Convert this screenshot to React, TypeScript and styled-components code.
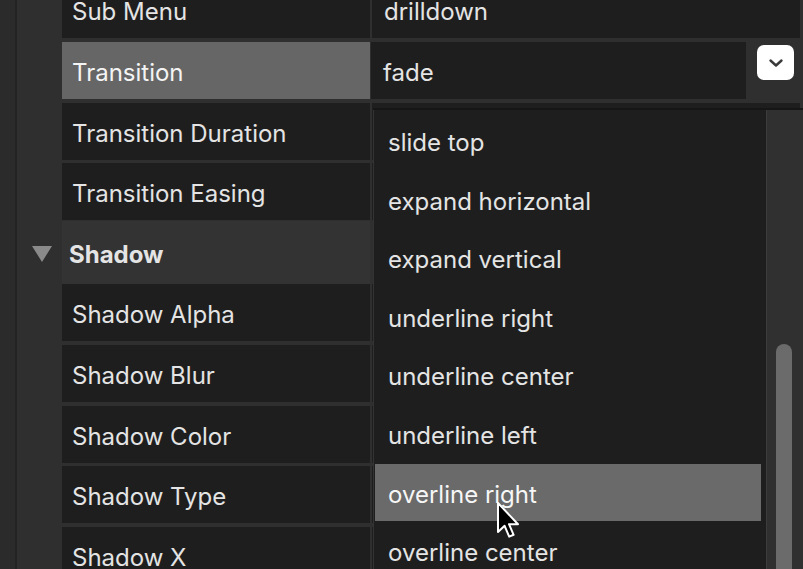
import styled, { createGlobalStyle } from 'styled-components';

const GlobalStyle = createGlobalStyle`
  html, body { margin: 0; padding: 0; background: #2f2f2f; }
  body { font-family: Inter, "Open Sans", sans-serif; -webkit-font-smoothing: antialiased; }
`;

const Screen = styled.div`
  position: relative;
  display: flex;
  width: 803px;
  height: 569px;
  overflow: hidden;
  background: #2f2f2f;
`;

const Gutter = styled.div`
  width: 15px;
  flex-shrink: 0;
  background: #2b2b2b;
  border-right: 2px solid #232323;
`;

const Panel = styled.div`
  flex: 1;
  display: flex;
  flex-direction: column;
  gap: 3.6px;
  margin-top: -18.6px;
  padding-left: 3px;
`;

const Row = styled.div<{ $header?: boolean }>`
  display: grid;
  grid-template-columns: 42px 308px 1fr;
  height: ${p => (p.$header ? '64px' : '57px')};
  margin: ${p => (p.$header ? '-2.8px 0 -4.2px' : '0')};
  padding-right: 3px;
  flex-shrink: 0;
`;

const Indent = styled.div`
  display: flex;
  align-items: center;
  justify-content: center;
  padding-left: 2px;
`;

const Triangle = styled.div`
  width: 0;
  height: 0;
  border-left: 10px solid transparent;
  border-right: 10px solid transparent;
  border-top: 16px solid #8a8a8a;
  margin-top: 2px;
`;

const Label = styled.div<{ $active?: boolean; $header?: boolean }>`
  display: flex;
  align-items: center;
  padding-left: ${p => (p.$header ? '7px' : '10px')};
  padding-top: 4px;
  background: ${p => (p.$active ? '#666666' : p.$header ? '#333333' : '#1e1e1e')};
  color: ${p => (p.$active ? '#f4f4f4' : '#e4e4e4')};
  font-size: 24px;
  font-weight: ${p => (p.$header ? 700 : 400)};
  white-space: nowrap;
`;

const Value = styled.div<{ $bare?: boolean }>`
  position: relative;
  display: flex;
  align-items: center;
  margin-left: 2px;
  padding-left: ${p => (p.$bare ? '0' : '12px')};
  padding-top: 4px;
  background: ${p => (p.$bare ? 'transparent' : '#1e1e1e')};
  color: #e4e4e4;
  font-size: 24px;
`;

const Field = styled.div`
  flex: 1;
  align-self: stretch;
  display: flex;
  align-items: center;
  margin: -4px 0 0 -1px;
  padding: 4px 0 0 12px;
  background: #1e1e1e;
`;

const SelectSlot = styled.div`
  width: 54px;
  align-self: stretch;
  display: flex;
  justify-content: flex-end;
  padding: 3px 6px 0 0;
  margin-top: -4px;
  box-sizing: border-box;
`;

const SelectButton = styled.div`
  width: 37px;
  height: 35px;
  border-radius: 7px;
  background: #ffffff;
  display: flex;
  align-items: center;
  justify-content: center;
`;

const Dropdown = styled.div`
  position: absolute;
  top: 108px;
  left: 373px;
  right: 0;
  bottom: 0;
  display: flex;
  border-top: 2px solid #161616;
  background: #2f2f2f;
`;

const List = styled.div`
  flex: 1;
  display: flex;
  flex-direction: column;
  gap: 1.6px;
  padding: 2px 5px 2px 1px;
  background: #1e1e1e;
  border-left: 1px solid #333;
`;

const Item = styled.div<{ $hover?: boolean }>`
  height: 57px;
  flex-shrink: 0;
  display: flex;
  align-items: center;
  padding: 4px 0 0 13px;
  box-sizing: border-box;
  background: ${p => (p.$hover ? '#6a6a6a' : 'transparent')};
  color: ${p => (p.$hover ? '#f6f6f6' : '#e4e4e4')};
  font-size: 24px;
`;

const Track = styled.div`
  position: relative;
  width: 36px;
  background: #303030;
  border-left: 1px solid #3c3c3c;
`;

const Thumb = styled.div`
  position: absolute;
  top: 234px;
  left: 9px;
  width: 16px;
  height: 300px;
  border-radius: 8px;
  background: #6b6b6b;
`;

const Pointer = styled.svg`
  position: absolute;
  left: 496px;
  top: 501px;
`;

type Prop = { label: string; value?: string; select?: boolean; active?: boolean; header?: boolean };

const props: Prop[] = [
  { label: 'Sub Menu', value: 'drilldown' },
  { label: 'Transition', value: 'fade', select: true, active: true },
  { label: 'Transition Duration' },
  { label: 'Transition Easing' },
  { label: 'Shadow', header: true },
  { label: 'Shadow Alpha' },
  { label: 'Shadow Blur' },
  { label: 'Shadow Color' },
  { label: 'Shadow Type' },
  { label: 'Shadow X' },
];

const options = [
  'slide top',
  'expand horizontal',
  'expand vertical',
  'underline right',
  'underline center',
  'underline left',
  'overline right',
  'overline center',
];

export default function App() {
  return (
    <>
      <GlobalStyle />
      <Screen>
        <Gutter />
        <Panel>
          {props.map(p => (
            <Row key={p.label} $header={p.header}>
              <Indent>{p.header && <Triangle />}</Indent>
              <Label $active={p.active} $header={p.header}>{p.label}</Label>
              {p.header ? (
                <Value $bare />
              ) : p.select ? (
                <Value $bare>
                  <Field>{p.value}</Field>
                  <SelectSlot>
                    <SelectButton>
                      <svg width="16" height="10" viewBox="0 0 16 10">
                        <path d="M2.5 2.5 L8 7.5 L13.5 2.5" fill="none" stroke="#3a3a3a" strokeWidth="2.4" strokeLinecap="round" strokeLinejoin="round" />
                      </svg>
                    </SelectButton>
                  </SelectSlot>
                </Value>
              ) : (
                <Value>{p.value}</Value>
              )}
            </Row>
          ))}
        </Panel>
        <Dropdown>
          <List>
            {options.map(o => (
              <Item key={o} $hover={o === 'overline right'}>{o}</Item>
            ))}
          </List>
          <Track>
            <Thumb />
          </Track>
        </Dropdown>
        <Pointer width="26" height="38" viewBox="0 0 13 19">
          <path d="M1 1 L1 15.5 L4.3 12.4 L6.6 17.8 L8.8 16.9 L6.5 11.6 L11 11.6 Z" fill="#000" stroke="#fff" strokeWidth="1" strokeLinejoin="round" />
        </Pointer>
      </Screen>
    </>
  );
}
